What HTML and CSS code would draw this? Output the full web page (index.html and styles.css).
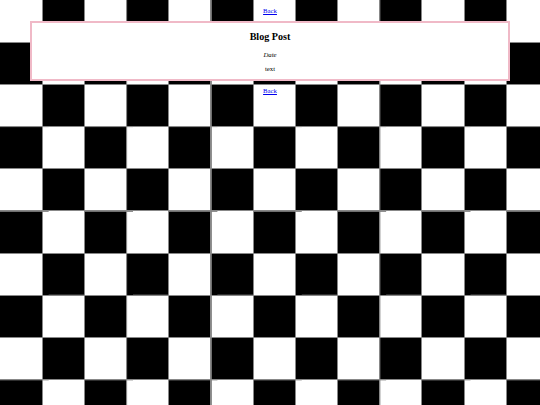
FILE: index.html
```html
<!DOCTYPE html>
<html lang="en">
<head>
<meta charset="utf-8">
<title>Blog Post</title>
<link rel="stylesheet" href="styles.css">
</head>
<body class="page">
  <div class="board">
    <div class="nav"><a class="back" href="#">Back</a></div>
    <article class="post">
      <h2 class="post-title">Blog Post</h2>
      <p class="post-date"><em>Date</em></p>
      <p class="post-text">text</p>
    </article>
    <div class="nav"><a class="back" href="#">Back</a></div>
  </div>
</body>
</html>
```

FILE: styles.css
```css
html, body {
  margin: 0;
  padding: 0;
}

.page {
  background: #fff;
}

.board {
  min-height: 405px;
  padding-top: 7px;
  box-sizing: border-box;
  font-family: "Liberation Serif", "Times New Roman", serif;
  font-size: 6.75px;
  line-height: 1.15;
  color: #000;
  background-color: #fff;
  background-image:
    linear-gradient(to right,
      transparent 0 42px, #888 42px 43px,
      transparent 43px 84px, #888 84px 85px,
      transparent 85px 126px, #888 126px 127px,
      transparent 127px 168px, #888 168px 169px,
      transparent 169px 210px, #888 210px 211px,
      transparent 211px 253px, #888 253px 254px,
      transparent 254px 295px, #888 295px 296px,
      transparent 296px 337px, #888 337px 338px,
      transparent 338px 379px, #888 379px 380px,
      transparent 380px 421px, #888 421px 422px,
      transparent 422px 464px, #888 464px 465px,
      transparent 465px 506px, #888 506px 507px,
      transparent 507px),
    linear-gradient(to bottom,
      transparent 0 42px, #888 42px 43px,
      transparent 43px 84px, #888 84px 85px,
      transparent 85px 126px, #888 126px 127px,
      transparent 127px 168px, #888 168px 169px,
      transparent 169px 210px, #888 210px 211px,
      transparent 211px 253px, #888 253px 254px,
      transparent 254px 295px, #888 295px 296px,
      transparent 296px 337px, #888 337px 338px,
      transparent 338px 379px, #888 379px 380px,
      transparent 380px),
    conic-gradient(#000 0 25%, #fff 0 50%, #000 0 75%, #fff 0);
  background-size: 540px 100%, 100% 405px, 84.375px 84.375px;
  background-repeat: no-repeat, no-repeat, repeat;
  background-position: 0 0, 0 0, 0 0;
}

.nav {
  text-align: center;
}

.back {
  color: #0000ee;
  text-decoration: underline;
}

.post {
  margin: 6.25px 30px;
  background: #fff;
  border: 2px solid #f0b9c7;
  text-align: center;
}

.post-title {
  margin: 7.75px 0 8.2px;
  font-size: 10.125px;
  font-weight: bold;
  line-height: 1.15;
}

.post-date,
.post-text {
  margin: 6.5px 0;
}
```
